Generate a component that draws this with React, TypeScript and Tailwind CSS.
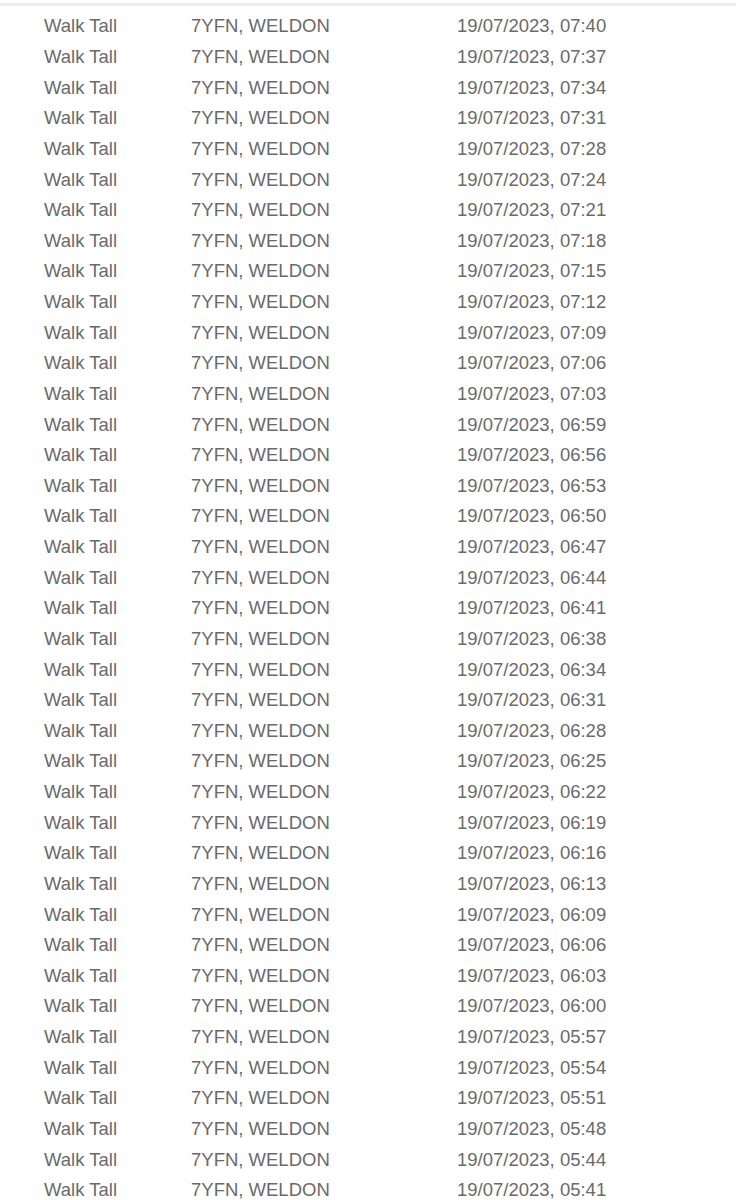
const times = [
  '07:40', '07:37', '07:34', '07:31', '07:28', '07:24', '07:21', '07:18', '07:15', '07:12',
  '07:09', '07:06', '07:03', '06:59', '06:56', '06:53', '06:50', '06:47', '06:44', '06:41',
  '06:38', '06:34', '06:31', '06:28', '06:25', '06:22', '06:19', '06:16', '06:13', '06:09',
  '06:06', '06:03', '06:00', '05:57', '05:54', '05:51', '05:48', '05:44', '05:41',
]

export default function App() {
  return (
    <div className="w-[736px] h-[1200px] overflow-hidden bg-white font-['Liberation_Sans',Arial,sans-serif]">
      <div className="h-[3px]" />
      <div className="h-[3px] bg-[#ececec]" />
      <div className="pt-[5px]">
        {times.map((t, i) => (
          <div key={i} className="flex items-center h-[30.63px] text-[18.5px] text-[#6a6a6a]">
            <span className="w-[191px] pl-[44px] shrink-0">Walk Tall</span>
            <span className="w-[266px] shrink-0">7YFN, WELDON</span>
            <span>19/07/2023, {t}</span>
          </div>
        ))}
      </div>
    </div>
  )
}
